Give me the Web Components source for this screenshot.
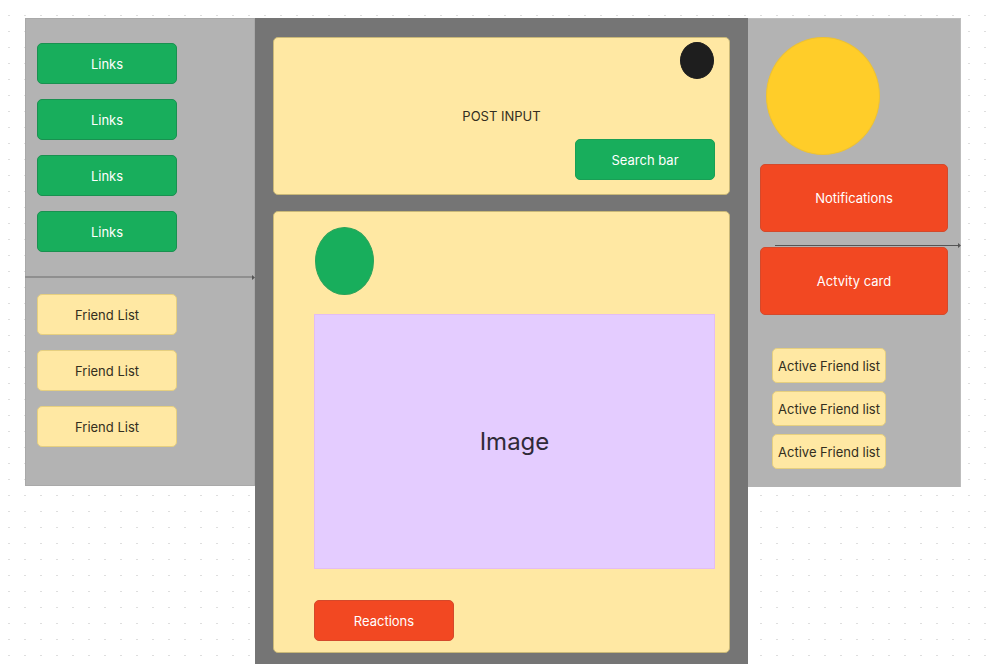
<!DOCTYPE html>
<html lang="en">
<head>
<meta charset="utf-8">
<meta name="viewport" content="width=device-width, initial-scale=1">
<title>Social feed wireframe</title>
<style>
  body {
    margin: 0;
    font: 13px/20px Inter, "Liberation Sans", sans-serif;
    color: #332e20;
  }
</style>
</head>
<body>
<wf-board>
  <wf-panel slot="left">
    <wf-list label="Links">
      <wf-link>Links</wf-link>
      <wf-link>Links</wf-link>
      <wf-link>Links</wf-link>
      <wf-link>Links</wf-link>
    </wf-list>
    <wf-arrow class="soft"></wf-arrow>
    <wf-list label="Friends">
      <wf-item>Friend List</wf-item>
      <wf-item>Friend List</wf-item>
      <wf-item>Friend List</wf-item>
    </wf-list>
  </wf-panel>
  <wf-feed></wf-feed>
  <wf-activity slot="right"></wf-activity>
</wf-board>

<script>
  const component = (name, html) => {
    const template = document.createElement('template');
    template.innerHTML = html;
    customElements.define(name, class extends HTMLElement {
      constructor() {
        super();
        this.attachShadow({ mode: 'open' }).append(template.content.cloneNode(true));
      }
      connectedCallback() {
        const text = this.getAttribute('label');
        if (!text) return;
        const field = this.shadowRoot.querySelector('input');
        if (field) field.placeholder = text;
        const target = this.shadowRoot.querySelector('[data-label]');
        if (target) target.setAttribute('aria-label', text);
      }
    });
  };

  // Dotted canvas with three columns
  component('wf-board', `
    <style>
      :host {
        box-sizing: border-box;
        display: grid;
        grid-template-columns: 230fr 493fr 213fr;
        min-height: 100vh;
        padding: 18px 27px 0 25px;
        background:
          conic-gradient(from 270deg at 2px 1px, #dedede 90deg, transparent 0) 8px 15px / 16px 16px,
          #fff;
      }
      aside { align-self: start; }
      main { display: grid; }
    </style>
    <aside><slot name="left"></slot></aside>
    <main><slot></slot></main>
    <aside><slot name="right"></slot></aside>`);

  component('wf-panel', `
    <style>
      :host {
        display: flex;
        flex-direction: column;
        padding: 25px 0 39px;
        background: #b3b3b3;
        box-shadow: inset 0 0 0 1px #a9a9a9;
      }
      ::slotted(wf-list) { margin-left: 12px; }
      ::slotted(wf-arrow) { margin: 24px 0 16px; }
    </style>
    <slot></slot>`);

  component('wf-list', `
    <style>
      :host { display: block; width: 140px; }
      nav { display: grid; gap: 15px; }
    </style>
    <nav data-label><slot></slot></nav>`);

  component('wf-link', `
    <style>
      :host { display: block; }
      a {
        box-sizing: border-box;
        display: grid;
        place-items: center;
        height: 41px;
        border: 1px solid #199150;
        border-radius: 5px;
        background: #18ae5c;
        color: #fff;
        text-decoration: none;
      }
    </style>
    <a href="#"><slot></slot></a>`);

  component('wf-item', `
    <style>
      :host {
        box-sizing: border-box;
        display: grid;
        place-items: center;
        height: var(--item-height, 41px);
        border: 1px solid #e6cf7f;
        border-radius: 5px;
        background: #ffe8a3;
        white-space: nowrap;
      }
    </style>
    <slot></slot>`);

  component('wf-arrow', `
    <style>
      :host { display: flex; align-items: center; height: 1px; color: #555; }
      :host(.soft) { height: 2px; --line: #8f8f8f; }
      span { flex: 1; height: 100%; background: var(--line, currentColor); }
      svg { flex: none; width: 3px; height: 5px; }
    </style>
    <span></span>
    <svg viewBox="0 0 3 5" aria-hidden="true"><path d="M0 0 3 2.5 0 5Z" fill="currentColor"/></svg>`);

  component('wf-shape', `
    <style>
      :host {
        box-sizing: border-box;
        display: block;
        flex: none;
        border: 1px solid var(--edge);
        border-radius: 50%;
        background: var(--fill);
      }
    </style>`);

  component('wf-button', `
    <style>
      :host { display: block; }
      button {
        box-sizing: border-box;
        display: block;
        width: 100%;
        height: var(--button-height, 41px);
        padding: 0;
        border: 1px solid #d4492b;
        border-radius: 5px;
        background: #f24822;
        color: #fff;
        font: inherit;
      }
    </style>
    <button type="button"><slot></slot></button>`);

  component('wf-field', `
    <style>
      :host { display: block; }
      input {
        box-sizing: border-box;
        display: block;
        width: 100%;
        height: 24px;
        padding: 0;
        border: 0;
        background: none;
        color: inherit;
        font: inherit;
        text-align: center;
        outline: none;
      }
      input::placeholder { color: inherit; opacity: 1; }
      :host(.search) input {
        height: 41px;
        border: 1px solid #199f55;
        border-radius: 5px;
        background: #18ae5c;
        color: #fff;
      }
    </style>
    <input type="text" data-label>`);

  component('wf-card', `
    <style>
      :host {
        box-sizing: border-box;
        display: flex;
        flex-direction: column;
        border: 1px solid #c9b878;
        border-radius: 5px;
        background: #ffe8a3;
      }
    </style>
    <slot></slot>`);

  component('wf-feed', `
    <style>
      :host {
        display: flex;
        flex-direction: column;
        gap: 16px;
        padding: 19px 18px 11px;
        background: #757575;
      }
      .compose { padding: 4px 14px 14px; }
      .menu {
        align-self: flex-end;
        width: 34px;
        height: 37px;
        margin: 0 1px 25px 0;
        --fill: #1e1e1e;
        --edge: #1e1e1e;
      }
      .search { align-self: flex-end; width: 140px; margin-top: 11px; }
      .post { padding: 15px 14px 11px 40px; }
      .avatar {
        width: 59px;
        height: 68px;
        margin-left: 1px;
        --fill: #18ae5c;
        --edge: #2ba35a;
      }
      figure {
        box-sizing: border-box;
        display: grid;
        place-items: center;
        min-height: 255px;
        margin: 19px 0 31px;
        border: 1px solid #e3bdf3;
        background: #e4ccff;
        color: #302a38;
        font-size: 24px;
        line-height: 32px;
      }
      wf-button { width: 140px; }
    </style>
    <wf-card class="compose">
      <wf-shape class="menu"></wf-shape>
      <wf-field label="POST INPUT"></wf-field>
      <wf-field class="search" label="Search bar"></wf-field>
    </wf-card>
    <wf-card class="post">
      <wf-shape class="avatar"></wf-shape>
      <figure><figcaption>Image</figcaption></figure>
      <wf-button>Reactions</wf-button>
    </wf-card>`);

  component('wf-activity', `
    <style>
      :host {
        display: flex;
        flex-direction: column;
        padding: 19px 0 18px 12px;
        background: #b3b3b3;
        box-shadow: inset 0 1px #bdbdbd, inset -1px 0 #bdbdbd;
      }
      .profile {
        width: 114px;
        height: 118px;
        margin: 0 0 9px 6px;
        --fill: #ffcd29;
        --edge: #edc233;
      }
      wf-button { margin-right: 13px; --button-height: 68px; }
      wf-arrow { margin: 13px 0 1px 15px; }
      .active {
        display: grid;
        gap: 8px;
        width: 114px;
        margin: 33px 0 0 12px;
        --item-height: 35px;
      }
    </style>
    <wf-shape class="profile"></wf-shape>
    <wf-button>Notifications</wf-button>
    <wf-arrow></wf-arrow>
    <wf-button>Actvity card</wf-button>
    <div class="active">
      <wf-item>Active Friend list</wf-item>
      <wf-item>Active Friend list</wf-item>
      <wf-item>Active Friend list</wf-item>
    </div>`);
</script>
</body>
</html>
